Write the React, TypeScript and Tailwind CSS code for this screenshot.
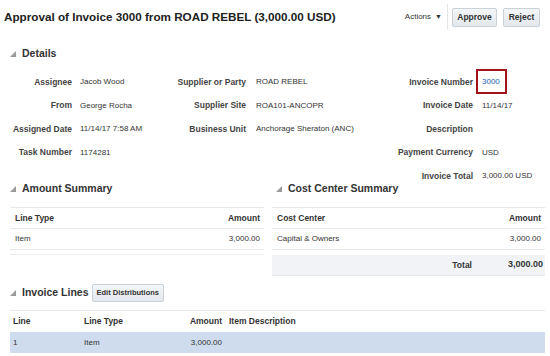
import React from 'react';

const Twisty: React.FC = () => (
    <svg width="6" height="6" viewBox="0 0 6 6" className="shrink-0">
        <polygon points="6,0 6,6 0,6" fill="#9a9a9a" />
    </svg>
);

const SectionHeader: React.FC<{ title: string; children?: React.ReactNode }> = ({ title, children }) => (
    <div className="flex items-center h-[14px]">
        <Twisty />
        <span className="ml-[6px] text-[10.5px] font-bold text-[#333]">{title}</span>
        {children}
    </div>
);

type Cell = [string, string] | null;

const detailRows: Cell[][] = [
    [['Assignee', 'Jacob Wood'], ['Supplier or Party', 'ROAD REBEL'], ['Invoice Number', '3000']],
    [['From', 'George Rocha'], ['Supplier Site', 'ROA101-ANCOPR'], ['Invoice Date', '11/14/17']],
    [['Assigned Date', '11/14/17 7:58 AM'], ['Business Unit', 'Anchorage Sheraton (ANC)'], ['Description', '']],
    [['Task Number', '1174281'], null, ['Payment Currency', 'USD']],
    [null, null, ['Invoice Total', '3,000.00 USD']],
];

const App: React.FC = () => {
    return (
        <div className="w-[550px] h-[356px] overflow-hidden bg-white text-[#333] font-['Liberation_Sans',Arial,sans-serif]">
            {/* Title bar */}
            <div className="flex items-center h-[34px] pl-[4px] pr-[10px]">
                <h1 className="text-[11.7px] font-bold text-[#222] whitespace-nowrap">
                    Approval of Invoice 3000 from ROAD REBEL (3,000.00 USD)
                </h1>
                <div className="flex-1" />
                <div className="flex items-center text-[8px] text-[#333] mr-[5px]">
                    <span>Actions</span>
                    <span className="ml-[4px] text-[7px]">▼</span>
                </div>
                <div className="w-px h-[26px] bg-[#e6e6e6]" />
                <div className="flex gap-[6px] ml-[4px]">
                    <button className="w-[45px] h-[19px] text-[8.5px] font-bold text-[#333] bg-gradient-to-b from-[#f4f6f8] to-[#e3e8ed] border border-[#c9d1d9] rounded-[2px]">
                        Approve
                    </button>
                    <button className="w-[37px] h-[19px] text-[8.5px] font-bold text-[#333] bg-gradient-to-b from-[#f4f6f8] to-[#e3e8ed] border border-[#c9d1d9] rounded-[2px]">
                        Reject
                    </button>
                </div>
            </div>

            {/* Details */}
            <div className="mt-[13px] pl-[10px]">
                <SectionHeader title="Details" />
            </div>
            <div className="mt-[15px] grid grid-cols-[72px_98px_76px_130px_97px_1fr] auto-rows-[12px] gap-y-[11.5px] items-center">
                {detailRows.map((row, ri) =>
                    row.map((cell, ci) => (
                        <React.Fragment key={`${ri}-${ci}`}>
                            <div className="text-right text-[8.5px] font-bold text-[#444] whitespace-nowrap">{cell ? cell[0] : ''}</div>
                            <div className={`text-[8px] text-[#333] whitespace-nowrap ${ci === 0 ? 'pl-[8px]' : ci === 1 ? 'pl-[10px]' : 'pl-[9px]'}`}>
                                {cell && cell[0] === 'Invoice Number' ? (
                                    <span className="relative text-[#1d5fae]">
                                        {cell[1]}
                                        <span className="absolute -left-[6px] -right-[7px] -top-[8px] -bottom-[8px] border-2 border-[#a3131c]" />
                                    </span>
                                ) : cell ? cell[1] : ''}
                            </div>
                        </React.Fragment>
                    ))
                )}
            </div>

            {/* Summaries */}
            <div className="flex gap-[8px] pl-[10px] pr-[5px]">
                <div className="w-[254px]">
                    <SectionHeader title="Amount Summary" />
                    <div className="mt-[11px] text-[8px]">
                        <div className="flex items-center justify-between h-[22px] px-[5px] pr-[4px] border-y border-[#e8e8e8] font-bold text-[8.5px]">
                            <span>Line Type</span>
                            <span>Amount</span>
                        </div>
                        <div className="flex items-center justify-between h-[21px] px-[5px] pr-[4px] border-b border-[#e8e8e8]">
                            <span>Item</span>
                            <span>3,000.00</span>
                        </div>
                        <div className="h-[5px] border-b border-[#ececec]" />
                    </div>
                </div>
                <div className="flex-1">
                    <div className="pl-[4px]">
                        <SectionHeader title="Cost Center Summary" />
                    </div>
                    <div className="mt-[11px] text-[8px]">
                        <div className="flex items-center justify-between h-[22px] px-[5px] pr-[4px] border-y border-[#e8e8e8] font-bold text-[8.5px]">
                            <span>Cost Center</span>
                            <span>Amount</span>
                        </div>
                        <div className="flex items-center justify-between h-[21px] px-[5px] pr-[4px] border-b border-[#e8e8e8]">
                            <span>Capital &amp; Owners</span>
                            <span>3,000.00</span>
                        </div>
                        <div className="mt-[5px] grid grid-cols-[1fr_73px] items-center h-[21px] bg-[#f1f3f6] border-b border-[#e4e7eb] font-bold">
                            <span className="text-right text-[8.5px]">Total</span>
                            <span className="text-right pr-[2px] text-[9px]">3,000.00</span>
                        </div>
                    </div>
                </div>
            </div>

            {/* Invoice Lines */}
            <div className="mt-[7px] pl-[10px] flex items-center h-[20px]">
                <Twisty />
                <span className="ml-[6px] text-[10.5px] font-bold text-[#333]">Invoice Lines</span>
                <button className="ml-[3px] h-[18px] px-[4px] text-[7.5px] font-bold text-[#333] bg-gradient-to-b from-[#f4f6f8] to-[#e3e8ed] border border-[#c9d1d9] rounded-[2px]">
                    Edit Distributions
                </button>
            </div>
            <div className="mt-[7px] ml-[10px] mr-[5px] text-[8px]">
                <div className="grid grid-cols-[71px_69px_75px_1fr] items-center h-[22px] border-t border-[#e8e8e8] font-bold text-[8.5px]">
                    <span className="pl-[3px]">Line</span>
                    <span className="pl-[3px]">Line Type</span>
                    <span className="text-right pr-[3px]">Amount</span>
                    <span className="pl-[4px]">Item Description</span>
                </div>
                <div className="grid grid-cols-[71px_69px_75px_1fr] items-center h-[21px] bg-[#cedced]">
                    <span className="pl-[3px]">1</span>
                    <span className="pl-[3px]">Item</span>
                    <span className="text-right pr-[3px]">3,000.00</span>
                    <span />
                </div>
            </div>
        </div>
    );
};

export default App;
